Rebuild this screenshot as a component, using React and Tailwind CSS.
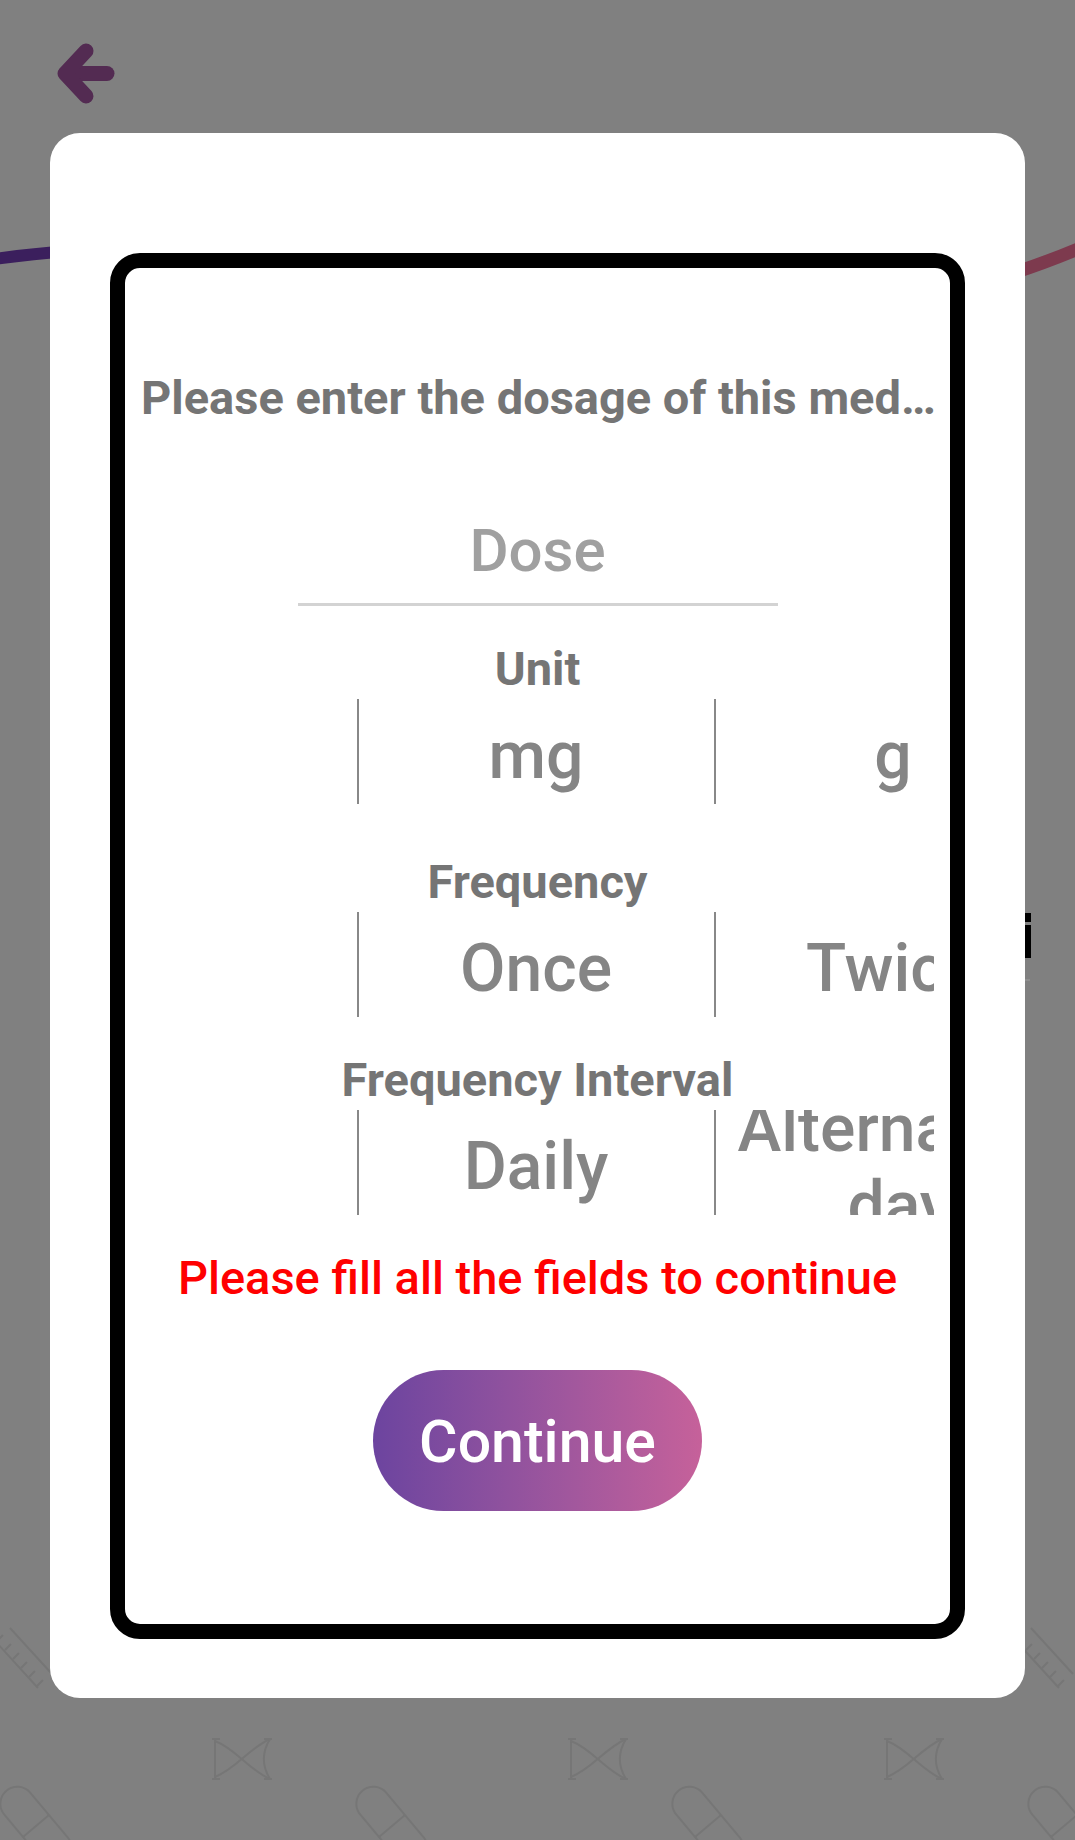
function Background() {
  const dnaXs = [212, 568, 884];
  const pillXs = [0, 356, 672, 1028];
  return (
    <svg className="absolute left-0 top-0" width="1075" height="1840" viewBox="0 0 1075 1840" fill="none">
      <path d="M-5 259 Q 30 254 70 251" stroke="#3b1f5d" strokeWidth="12" />
      <path d="M1010 274 Q 1045 263 1085 246" stroke="#7d3a4e" strokeWidth="13" />
      <rect x="1016" y="913" width="15" height="9" fill="#000" />
      <rect x="1016" y="925" width="15" height="33" fill="#000" />
      <line x1="1016" y1="980" x2="1030" y2="980" stroke="#8e8e8e" strokeWidth="2" />
      <g stroke="#767676" strokeWidth="2" fill="none">
        {dnaXs.map((x) => (
          <g key={x} transform={`translate(${x} 1737)`}>
            <path d="M3 2 V42" />
            <path d="M0 2 H8 M0 42 H8" />
            <path d="M3 4 C 24 12 36 32 58 42" />
            <path d="M3 40 C 24 32 36 12 58 2" />
            <path d="M58 2 C 50 15 50 29 58 42" />
            <path d="M52 2 H60 M52 42 H60" />
          </g>
        ))}
        {pillXs.map((x) => (
          <g key={x} transform={`translate(${x + 36} 1826) rotate(-40)`}>
            <rect x="-17" y="-46" width="34" height="92" rx="17" />
            <line x1="-17" y1="0" x2="17" y2="0" />
          </g>
        ))}
        {[0, 1021].map((x) => (
          <g key={x} transform={`translate(${x} 1630)`}>
            <path d="M-4 12 L38 58 M10 -2 L52 44" />
            <path d="M3 5 L-3 11 M11 14 L5 20 M19 23 L13 29 M27 32 L21 38 M35 41 L29 47 M43 50 L37 56" />
          </g>
        ))}
      </g>
    </svg>
  );
}

function BackArrow() {
  return (
    <svg className="absolute left-[50px] top-[36px]" width="72" height="74" viewBox="50 36 72 74" fill="none">
      <path d="M66 73.5 H107" stroke="#532b52" strokeWidth="15" strokeLinecap="round" />
      <path d="M86 51 L65 73.5 L86 96" stroke="#532b52" strokeWidth="15" strokeLinecap="round" strokeLinejoin="round" />
    </svg>
  );
}

function Picker({ items }) {
  return (
    <div className="mt-[3px] w-[792px] h-[105px] overflow-hidden flex">
      <div className="w-[215px] shrink-0" />
      {items.map((it, i) => (
        <div
          key={i}
          className="w-[357px] shrink-0 h-full border-l-2 border-[#888888] pt-[8px] flex items-center justify-center overflow-hidden text-[66px] leading-[77px] font-medium text-[#858585] whitespace-nowrap"
        >
          {it}
        </div>
      ))}
    </div>
  );
}

export default function App() {
  return (
    <div className="relative w-[1075px] h-[1840px] bg-[#808080] overflow-hidden font-['Roboto',sans-serif]">
      <Background />
      <BackArrow />
      <div className="absolute inset-0 pt-[133px] px-[50px]">
        <div className="h-[1565px] bg-white rounded-[30px] pt-[120px] px-[60px]">
          <div className="h-[1386px] border-[15px] border-black rounded-[30px] flex flex-col items-center">
            <div className="w-full pl-[16px] pr-[8px] pt-[102px] truncate text-[47px] leading-[56px] font-bold text-[#757575]">
              Please enter the dosage of this medication
            </div>
            <div className="mt-[90px] w-[480px] border-b-[3px] border-[#d3d3d3] pb-[17px] text-center text-[60px] leading-[70px] font-medium text-[#a0a0a0]">
              Dose
            </div>
            <div className="mt-[36px] text-[47px] leading-[54px] font-bold text-[#757575]">Unit</div>
            <Picker items={["mg", "g", "mcg"]} />
            <div className="mt-[51px] text-[47px] leading-[54px] font-bold text-[#757575]">Frequency</div>
            <Picker items={["Once", "Twice", "Thrice"]} />
            <div className="mt-[36px] text-[47px] leading-[54px] font-bold text-[#757575]">Frequency Interval</div>
            <Picker
              items={[
                "Daily",
                <div className="w-full text-left">
                  <div className="pl-[22px]">Alternate</div>
                  <div className="pl-[132px]">days</div>
                </div>,
                "Weekly",
              ]}
            />
            <div className="mt-[35px] text-[47px] leading-[55px] font-medium text-[#ff0000]">
              Please fill all the fields to continue
            </div>
            <button className="mt-[65px] w-[329px] h-[141px] rounded-full bg-linear-to-r from-[#6c449f] to-[#c6619a] pt-[4px] text-[59px] font-medium text-white">
              Continue
            </button>
          </div>
        </div>
      </div>
    </div>
  );
}
